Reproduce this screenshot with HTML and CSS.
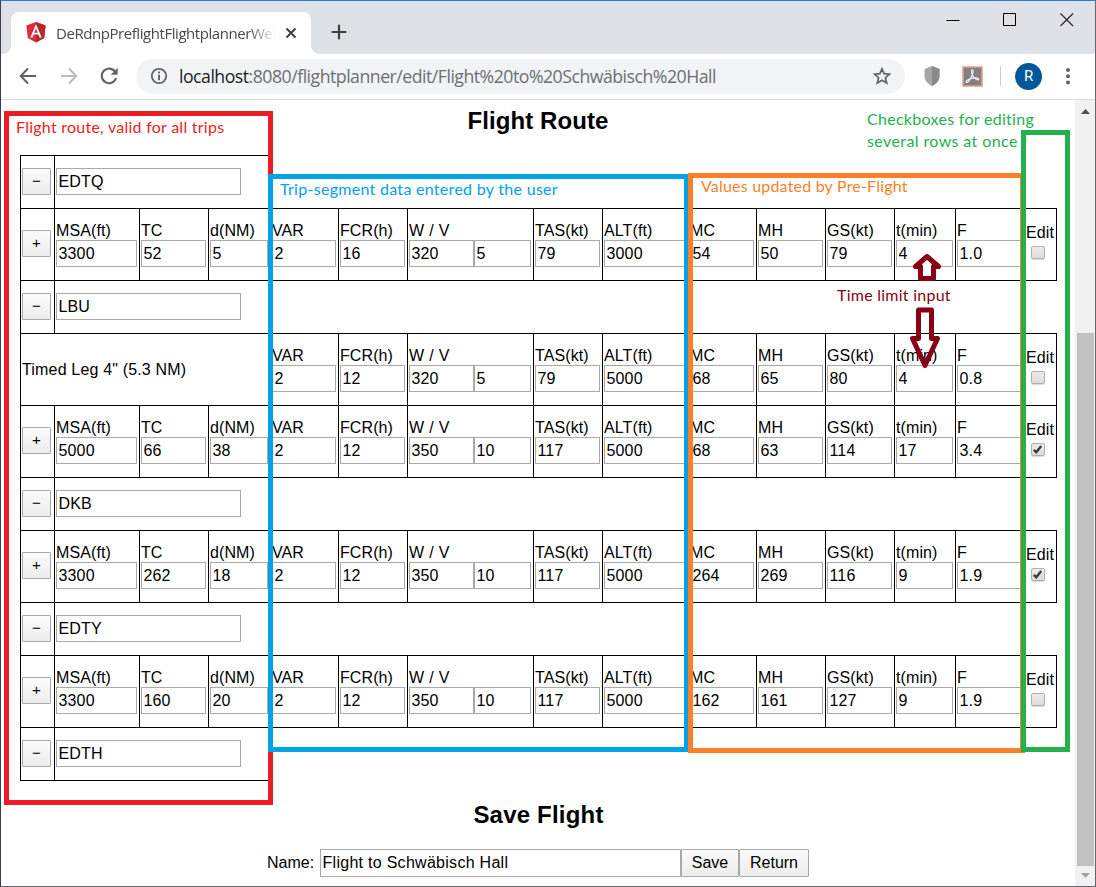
FILE: index.html
```html
<!DOCTYPE html>
<html lang="en">
<head>
<meta charset="utf-8">
<title>DeRdnpPreflightFlightplannerWeb</title>
<link rel="stylesheet" href="styles.css">
</head>
<body>
<div class="window">
  <header class="tabstrip">
    <div class="tab">
      <svg class="favicon" width="20" height="21" viewBox="0 0 20 21"><path fill="#dd2c34" d="M10 0 19.600 3.400 18.200 16 10 20.600 1.800 16 .4 3.400z"/><path fill="#b52831" d="M10 0 19.600 3.400 18.200 16 10 20.600z"/><path fill="#fff" fill-rule="evenodd" d="M10 2.300 15.700 15.400H13.500L12.300 12.500H7.700L6.500 15.400H4.300zM10 6.600 8.300 10.800H11.700z"/></svg>
      <span class="tab-title">DeRdnpPreflightFlightplannerWeb</span>
      <svg class="tab-close" width="12" height="12" viewBox="0 0 12 12"><path d="M1.500 1.500 10.500 10.500M10.500 1.500 1.500 10.500" stroke="#3c4043" stroke-width="2"/></svg>
    </div>
    <svg class="new-tab" width="16" height="16" viewBox="0 0 16 16"><path d="M8 .7V15.300M.7 8H15.300" stroke="#3c4043" stroke-width="2.200"/></svg>
    <div class="window-buttons">
      <svg width="14" height="14" viewBox="0 0 14 14"><path d="M.5 7.500H13.500" stroke="#000"/></svg>
      <svg width="14" height="14" viewBox="0 0 14 14"><path d="M.5.5H12.500V12.500H.5z" fill="none" stroke="#000"/></svg>
      <svg width="14" height="14" viewBox="0 0 14 14"><path d="M.5.5 13 13M13 .5.5 13" stroke="#222" stroke-width="1.100"/></svg>
    </div>
  </header>
  <nav class="toolbar">
    <svg class="back" width="18" height="18" viewBox="0 0 18 18" fill="none" stroke="#5f6368" stroke-width="2"><path d="M17 9H2M9 1.500 1.700 9 9 16.500"/></svg>
    <svg class="forward" width="18" height="18" viewBox="0 0 18 18" fill="none" stroke="#babcbe" stroke-width="2"><path d="M1 9H16M9 1.500 16.300 9 9 16.500"/></svg>
    <svg class="reload" width="18" height="18" viewBox="0 0 18 18"><path d="M15.300 5A7.300 7.300 0 1 0 16.100 11" fill="none" stroke="#5f6368" stroke-width="2.100"/><path d="M17.700.8V7.800H10.700z" fill="#5f6368"/></svg>
    <div class="omnibox">
      <svg class="info" width="18" height="18" viewBox="0 0 18 18"><circle cx="9" cy="9" r="7.200" fill="none" stroke="#5f6368" stroke-width="1.800"/><path d="M9 7.800V13.200M9 4.500V6.400" stroke="#5f6368" stroke-width="1.900"/></svg>
      <span class="url"><b>localhost</b>:8080/flightplanner/edit/Flight%20to%20Schwäbisch%20Hall</span>
      <svg class="star" width="18" height="18" viewBox="0 0 18 18"><path d="M9 1.800 11.100 6.700 16.500 7.200 12.400 10.700 13.700 16 9 13.200 4.300 16 5.600 10.700 1.500 7.200 6.900 6.700z" fill="none" stroke="#5f6368" stroke-width="1.700"/></svg>
    </div>
    <svg class="shield" width="16" height="20" viewBox="0 0 16 20"><path d="M8 0 15.500 3V10C15.500 15 12 18 8 20 4 18 .5 15 .5 10V3z" fill="#a5a5a5"/><path d="M8 0 15.500 3V10C15.500 15 12 18 8 20z" fill="#8b8b8b"/></svg>
    <svg class="acrobat" width="21" height="21" viewBox="0 0 21 21"><path d="M1 1H20V20H1z" fill="#828080" stroke="#f0988c" stroke-width="1.600"/><path d="M10 3.800C12 3.300 11 7.500 9.500 10.500 8 14 5.500 17.300 4.200 16.300 3.300 15 7 12.800 10.500 12.200 14 11.500 17 12 16.700 13.500 16.200 15 12.500 12.500 11 10 9.500 7.500 9 4.500 10 3.800z" fill="none" stroke="#f2f2f2" stroke-width="1.200"/></svg>
    <span class="separator"></span>
    <span class="avatar">R</span>
    <svg class="menu" width="6" height="18" viewBox="0 0 6 18" fill="#5f6368"><circle cx="3" cy="3" r="2"/><circle cx="3" cy="9.200" r="2"/><circle cx="3" cy="15.400" r="2"/></svg>
  </nav>
  <div class="viewport">
    <main class="page">
      <h2 class="route-title">Flight Route</h2>
      <div class="route">
        <div class="row waypoint"><div class="cell act"><button>−</button></div><div class="cell"><input value="EDTQ"></div></div>
        <div class="row leg">
          <div class="cell act"><button>+</button></div>
          <div class="cell"><label>MSA(ft)</label><input value="3300"></div>
          <div class="cell"><label>TC</label><input value="52"></div>
          <div class="cell"><label>d(NM)</label><input value="5"></div>
          <div class="cell"><label>VAR</label><input value="2"></div>
          <div class="cell"><label>FCR(h)</label><input value="16"></div>
          <div class="cell wind"><label>W / V</label><div class="pair"><input value="320"><input value="5"></div></div>
          <div class="cell"><label>TAS(kt)</label><input value="79"></div>
          <div class="cell"><label>ALT(ft)</label><input value="3000"></div>
          <div class="cell"><label>MC</label><input value="54"></div>
          <div class="cell"><label>MH</label><input value="50"></div>
          <div class="cell"><label>GS(kt)</label><input value="79"></div>
          <div class="cell"><label>t(min)</label><input value="4"></div>
          <div class="cell"><label>F</label><input value="1.0"></div>
          <div class="cell edit"><label>Edit</label><span class="check"></span></div>
        </div>
        <div class="row waypoint"><div class="cell act"><button>−</button></div><div class="cell"><input value="LBU"></div></div>
        <div class="row leg">
          <div class="cell timed">Timed Leg 4" (5.3 NM)</div>
          <div class="cell"><label>VAR</label><input value="2"></div>
          <div class="cell"><label>FCR(h)</label><input value="12"></div>
          <div class="cell wind"><label>W / V</label><div class="pair"><input value="320"><input value="5"></div></div>
          <div class="cell"><label>TAS(kt)</label><input value="79"></div>
          <div class="cell"><label>ALT(ft)</label><input value="5000"></div>
          <div class="cell"><label>MC</label><input value="68"></div>
          <div class="cell"><label>MH</label><input value="65"></div>
          <div class="cell"><label>GS(kt)</label><input value="80"></div>
          <div class="cell"><label>t(min)</label><input value="4"></div>
          <div class="cell"><label>F</label><input value="0.8"></div>
          <div class="cell edit"><label>Edit</label><span class="check"></span></div>
        </div>
        <div class="row leg">
          <div class="cell act"><button>+</button></div>
          <div class="cell"><label>MSA(ft)</label><input value="5000"></div>
          <div class="cell"><label>TC</label><input value="66"></div>
          <div class="cell"><label>d(NM)</label><input value="38"></div>
          <div class="cell"><label>VAR</label><input value="2"></div>
          <div class="cell"><label>FCR(h)</label><input value="12"></div>
          <div class="cell wind"><label>W / V</label><div class="pair"><input value="350"><input value="10"></div></div>
          <div class="cell"><label>TAS(kt)</label><input value="117"></div>
          <div class="cell"><label>ALT(ft)</label><input value="5000"></div>
          <div class="cell"><label>MC</label><input value="68"></div>
          <div class="cell"><label>MH</label><input value="63"></div>
          <div class="cell"><label>GS(kt)</label><input value="114"></div>
          <div class="cell"><label>t(min)</label><input value="17"></div>
          <div class="cell"><label>F</label><input value="3.4"></div>
          <div class="cell edit"><label>Edit</label><span class="check"><svg width="11" height="11" viewBox="0 0 11 11"><path d="M1.800 5.800 4.300 8.300 9.200 2" fill="none" stroke="#3c3c3c" stroke-width="2.400"/></svg></span></div>
        </div>
        <div class="row waypoint"><div class="cell act"><button>−</button></div><div class="cell"><input value="DKB"></div></div>
        <div class="row leg">
          <div class="cell act"><button>+</button></div>
          <div class="cell"><label>MSA(ft)</label><input value="3300"></div>
          <div class="cell"><label>TC</label><input value="262"></div>
          <div class="cell"><label>d(NM)</label><input value="18"></div>
          <div class="cell"><label>VAR</label><input value="2"></div>
          <div class="cell"><label>FCR(h)</label><input value="12"></div>
          <div class="cell wind"><label>W / V</label><div class="pair"><input value="350"><input value="10"></div></div>
          <div class="cell"><label>TAS(kt)</label><input value="117"></div>
          <div class="cell"><label>ALT(ft)</label><input value="5000"></div>
          <div class="cell"><label>MC</label><input value="264"></div>
          <div class="cell"><label>MH</label><input value="269"></div>
          <div class="cell"><label>GS(kt)</label><input value="116"></div>
          <div class="cell"><label>t(min)</label><input value="9"></div>
          <div class="cell"><label>F</label><input value="1.9"></div>
          <div class="cell edit"><label>Edit</label><span class="check"><svg width="11" height="11" viewBox="0 0 11 11"><path d="M1.800 5.800 4.300 8.300 9.200 2" fill="none" stroke="#3c3c3c" stroke-width="2.400"/></svg></span></div>
        </div>
        <div class="row waypoint"><div class="cell act"><button>−</button></div><div class="cell"><input value="EDTY"></div></div>
        <div class="row leg">
          <div class="cell act"><button>+</button></div>
          <div class="cell"><label>MSA(ft)</label><input value="3300"></div>
          <div class="cell"><label>TC</label><input value="160"></div>
          <div class="cell"><label>d(NM)</label><input value="20"></div>
          <div class="cell"><label>VAR</label><input value="2"></div>
          <div class="cell"><label>FCR(h)</label><input value="12"></div>
          <div class="cell wind"><label>W / V</label><div class="pair"><input value="350"><input value="10"></div></div>
          <div class="cell"><label>TAS(kt)</label><input value="117"></div>
          <div class="cell"><label>ALT(ft)</label><input value="5000"></div>
          <div class="cell"><label>MC</label><input value="162"></div>
          <div class="cell"><label>MH</label><input value="161"></div>
          <div class="cell"><label>GS(kt)</label><input value="127"></div>
          <div class="cell"><label>t(min)</label><input value="9"></div>
          <div class="cell"><label>F</label><input value="1.9"></div>
          <div class="cell edit"><label>Edit</label><span class="check"></span></div>
        </div>
        <div class="row waypoint"><div class="cell act"><button>−</button></div><div class="cell"><input value="EDTH"></div></div>
      </div>
      <h2 class="save-title">Save Flight</h2>
      <div class="save-form"><label>Name:</label><input value="Flight to Schwäbisch Hall"><button class="save">Save</button><button class="return">Return</button></div>
    </main>
    <div class="scrollbar">
      <svg width="9" height="5" viewBox="0 0 9 5"><path d="M4.500 0 9 5H0z" fill="#505050"/></svg>
      <div class="thumb"></div>
      <svg width="9" height="5" viewBox="0 0 9 5"><path d="M0 0H9L4.500 5z" fill="#a3a3a3"/></svg>
    </div>
  </div>

  <div class="frame red"></div>
  <div class="frame blue"></div>
  <div class="frame orange"></div>
  <div class="frame green"></div>
  <span class="note note-route">Flight route, valid for all trips</span>
  <span class="note note-trip">Trip-segment data entered by the user</span>
  <span class="note note-values">Values updated by Pre-Flight</span>
  <span class="note note-check1">Checkboxes for editing</span>
  <span class="note note-check2">several rows at once</span>
  <span class="note note-time">Time limit input</span>
  <svg class="arrow arrow-up" width="34" height="28" viewBox="0 0 34 28"><path d="M17 3.500 28.500 13.500H23.500V25.500H10.500V13.500H5.500z" fill="#fff" stroke="#880015" stroke-width="5" stroke-linejoin="round"/></svg>
  <svg class="arrow arrow-down" width="32" height="62" viewBox="0 0 32 62"><path d="M9.500 3H22.500V31.500H28.500L16 58.500 3.500 31.500H9.500z" fill="none" stroke="#880015" stroke-width="5" stroke-linejoin="round"/></svg>
</div>
</body>
</html>
```
FILE: styles.css
```css
* { box-sizing: border-box; }
body { margin: 0; font: 16px "Liberation Sans", Arial, sans-serif; color: #000; }
svg { display: block; flex: none; }
.window {
  position: relative; width: 1096px; height: 887px; overflow: hidden; background: #fff;
  border: 1px solid #65676b; border-top-color: #1883d7; border-left-color: #3a3d4c;
  display: flex; flex-direction: column;
}

/* browser chrome */
.tabstrip { height: 53px; background: #dee1e6; display: flex; align-items: flex-start; flex: none; }
.tab {
  position: relative; margin: 11px 0 0 10px; width: 300px; height: 42px; background: #fff; border-radius: 8px 8px 0 0;
  display: flex; align-items: center; padding: 0 0 1px 15px;
}
.tab::before, .tab::after {
  content: ""; position: absolute; bottom: 0; width: 8px; height: 8px;
}
.tab::before { left: -8px; background: radial-gradient(circle at 0 0, transparent 7.5px, #fff 8px); }
.tab::after { right: -8px; background: radial-gradient(circle at 100% 0, transparent 7.5px, #fff 8px); }
.tab-title {
  margin-left: 10px; width: 219px; overflow: hidden; white-space: nowrap; flex: none;
  font: 15px/22px "Open Sans", sans-serif; color: #45494d; letter-spacing: -0.44px;
  -webkit-mask-image: linear-gradient(90deg, #000 88%, transparent);
  mask-image: linear-gradient(90deg, #000 88%, transparent);
}
.tab-close { margin-left: 10px; }
.new-tab { margin: 23px 0 0 20px; }
.window-buttons { display: flex; gap: 43px; margin: 12px 21px 0 auto; }
.toolbar { height: 45px; flex: none; display: flex; align-items: center; padding: 0 0 1px 18px; }
.forward { margin-left: 23px; }
.reload { margin-left: 22px; }
.omnibox {
  margin-left: 18px; width: 769px; height: 35px; border-radius: 18px; background: #f1f3f4;
  display: flex; align-items: center; padding: 0 14px;
}
.url { margin-left: 11px; font: 17.7px/24px "Open Sans", sans-serif; color: #6b6f73; white-space: nowrap; letter-spacing: -0.5px; }
.url b { font-weight: 400; color: #202124; }
.star { margin-left: auto; }
.shield { margin-left: 19px; }
.acrobat { margin-left: 22px; }
.separator { width: 1px; height: 20px; background: #c9cbce; margin-left: 17px; }
.avatar {
  width: 27px; height: 27px; border-radius: 50%; background: #01579b; color: #fff; margin-left: 14px;
  font: 15px/27px Roboto, sans-serif; text-align: center;
}
.menu { margin-left: 23px; }

/* page */
.viewport { flex: 1; display: flex; border-top: 1px solid #dadce0; }
.page { width: 1074px; }
h2 { margin: 0; font-size: 24px; line-height: 28px; text-align: center; white-space: nowrap; }
.route-title { padding-top: 7px; letter-spacing: 0.08px; }
.route { margin: 20px 0 0 19px; width: 1037px; }
.row { display: grid; margin-bottom: -1px; border: solid #000; border-width: 1px 1px 1px 0; }
.waypoint { width: 251px; height: 54px; grid-template-columns: 34px 1fr; }
.leg { height: 73px; grid-template-columns: 34px 85px 69px 62px 68px 69px 126px 69px 86px 68px 69px 69px 61px 68px 33px; }
.cell { border-left: 1px solid #000; padding: 13px 0 0 1px; min-width: 0; }
.waypoint .cell { padding-top: 12px; }
.leg .act { padding-top: 21px; }
.cell label { display: block; line-height: 18px; white-space: nowrap; letter-spacing: 0.1px; }
.wind label { letter-spacing: 0.3px; }
input {
  display: block; border: 1px solid #a9a9a9; padding: 0 0 0 1.5px; margin: 0; height: 27px; background: #fff;
  font: 16px "Liberation Sans", Arial, sans-serif; color: #000; border-radius: 0; letter-spacing: 0.15px;
}
.cell input { width: calc(100% - 2px); }
.waypoint .cell input { width: 185px; }
.pair { display: flex; }
.pair input:first-child { width: 65px; }
.pair input:last-child { width: 57px; }
button {
  display: block; margin: 0; padding: 0; border: 1px solid #a9a9a9; border-radius: 1px; color: #000;
  background: linear-gradient(#fbfbfb, #ececec); font: 16px "Liberation Sans", Arial, sans-serif;
}
.act button { width: 29px; height: 27px; font-size: 15px; line-height: 21px; padding-bottom: 2px; }
.timed { grid-column: span 4; display: flex; align-items: center; padding: 0 0 0 1px; letter-spacing: 0.17px; }
.leg .edit { padding: 15px 0 0 2px; }
.check {
  display: block; width: 14px; height: 13px; margin: 4px 0 0 5px; border: 1px solid #b0b0b0; border-radius: 2px;
  background: linear-gradient(#ebebeb, #dcdcdc); box-shadow: 0 1px 1px #d8d8d8;
}
.save-title { padding-top: 21px; letter-spacing: 0.2px; padding-left: 1px; }
.save-form { display: flex; justify-content: center; margin-top: 20px; padding-left: 1px; line-height: 27px; }
.save-form label { width: 53px; margin-left: -1px; }
.save-form input { width: 361px; height: 28px; letter-spacing: 0.28px; }
.save-form button { height: 28px; }
.save { width: 58px; }
.return { width: 70px; }
.scrollbar { width: 20px; background: #f1f1f1; display: flex; flex-direction: column; align-items: center; padding: 9px 0 8px; }
.thumb { width: 17px; height: 533px; margin: auto 0 7px; background: #c1c1c1; }

/* annotations drawn over the window */
.frame { position: absolute; border: 5px solid; }
.red { left: 3px; top: 110px; width: 269px; height: 694px; border-color: #ed1c24; }
.blue { left: 267px; top: 173px; width: 421px; height: 578px; border-color: #00a2e8; }
.orange { left: 687px; top: 172px; width: 337px; height: 580px; border-color: #ff7f27; }
.green { left: 1020px; top: 129px; width: 49px; height: 622px; border-color: #22b14c; }
.note { position: absolute; font: 16px/20px Lato, Carlito, sans-serif; white-space: nowrap; letter-spacing: 0.25px; }
.note-route { left: 15px; top: 116px; color: #ed1c24; }
.note-trip { left: 279px; top: 178px; color: #00a2e8; letter-spacing: 0.29px; }
.note-values { left: 700px; top: 175px; color: #ff7f27; letter-spacing: 0.2px; }
.note-check1 { left: 866px; top: 108px; color: #22b14c; letter-spacing: 0.29px; }
.note-check2 { left: 866px; top: 130px; color: #22b14c; letter-spacing: 0.4px; }
.note-time { left: 836px; top: 284px; color: #880015; }
.arrow { position: absolute; }
.arrow-up { left: 908.5px; top: 251.500px; }
.arrow-down { left: 908px; top: 305.500px; }
```
